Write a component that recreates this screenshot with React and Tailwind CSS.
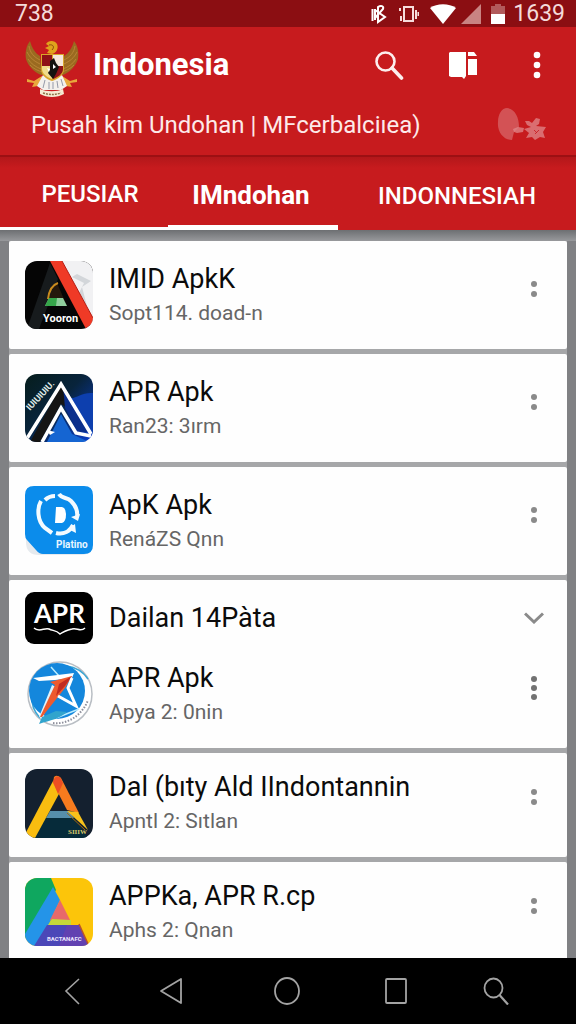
import clsx from 'clsx';

const TABS = [
  { label: 'PEUSIAR', className: 'text-2xl pl-3 pt-1 font-medium border-b-[3px] border-white' },
  { label: 'IMndohan', className: 'text-[26px] pr-1 pt-2 font-bold border-b-[5px] border-white' },
  { label: 'INDONNESIAH', className: 'text-2xl pt-1 font-medium' },
];

const GarudaEmblem = () => (
  <svg viewBox="0 0 54 58" className="w-[54px] h-[58px] shrink-0" aria-label="Garuda">
    {/* wings */}
    <path d="M5 1 C1 6 0 13 1 19 C3 26 9 32 16 35 L20 34 L16 27 L15 16 C10 13 7 8 5 1Z" fill="#9a6a20" />
    <path d="M49 1 C53 6 54 13 53 19 C51 26 45 32 38 35 L34 34 L38 27 L39 16 C44 13 47 8 49 1Z" fill="#9a6a20" />
    <path d="M4 6 C5 13 9 17 15 20 M2 12 C5 18 9 21 15 24 M3 19 C6 24 11 27 16 29 M5 25 C9 29 13 31 18 32" stroke="#c08a3a" strokeWidth=".8" fill="none" />
    <path d="M50 6 C49 13 45 17 39 20 M52 12 C49 18 45 21 39 24 M51 19 C48 24 43 27 38 29 M49 25 C45 29 41 31 36 32" stroke="#c08a3a" strokeWidth=".8" fill="none" />
    {/* head */}
    <path d="M21 4 C23 0 30 0 32 4 C34 9 31 13 27 14 L22 13 L24 10 L20 8 L24 6Z" fill="#e0a21c" />
    <path d="M24 5 C28 4 30 7 27 10" stroke="#8a4b10" strokeWidth="1" fill="none" />
    {/* legs and tail */}
    <path d="M2 39 L9 41 L17 36 L20 40 L13 46 L7 47 L9 43 L2 42Z" fill="#e9a83c" />
    <path d="M52 39 L45 41 L37 36 L34 40 L41 46 L47 47 L45 43 L52 42Z" fill="#e9a83c" />
    <path d="M18 35 L27 40 L37 35 L42 46 L36 50 L18 50 L12 46Z" fill="#f3f0ec" />
    <path d="M20 40 L18 48 M24 42 V49 M28 42 V49 M32 41 L33 48 M36 39 L38 46" stroke="#9499a8" strokeWidth="1" />
    {/* shield */}
    <path d="M16 14 H39 V29 C39 35 33 39 27 41 C21 39 16 35 16 29Z" fill="#d9a52a" />
    <path d="M17 15 H27 V26 H17Z" fill="#8e1117" />
    <path d="M28 15 H38 V26 H28Z" fill="#f5e8dc" />
    <path d="M17 26 H27 V39 C21 37 17 33 17 29Z" fill="#f0dc8a" />
    <path d="M28 26 H38 V29 C38 34 33 37 28 39Z" fill="#8e1117" />
    <path d="M25 21 L29 18 L31 23 L34 27 L31 34 L28 39 L23 33 L25 29Z" fill="#15130f" />
    <path d="M22 28 L25 29 L24 32Z M28 24 L31 27 L28 29Z" fill="#fff" />
    {/* ribbon */}
    <path d="M15 49 C22 52 32 52 38 49 L39 54 C32 58 22 58 15 54Z" fill="#f6ead2" />
    <path d="M18 53 C24 55 30 55 36 53" stroke="#8c7448" strokeWidth="1.500" strokeDasharray="2 1" fill="none" />
  </svg>
);

const FlowerMark = () => (
  <svg viewBox="0 0 50 36" className="w-[50px] h-9 shrink-0" fill="#e08a8c" aria-hidden="true">
    <path d="M10 1 C18 2 22 10 22 20 L17 25 L15 33 C7 33 0 25 1 15 C1 7 5 1 10 1Z" opacity=".5" />
    <path d="M16 22 L21 20 L27 21 L26 25 L20 26 L17 25Z" opacity=".75" />
    <path d="M28 14 L32 14 L35 16 L39 11 L43 12 L42 17 L39 19 L49 20 L46 25 L48 31 L43 30 L38 33 L35 30 L29 31 L32 26 L27 22 L34 20 L30 18Z" opacity=".75" />
    <path d="M37 23 L40 26 M42 23 L38 27" stroke="#c71b1e" strokeWidth=".8" />
  </svg>
);

const StatusBar = () => (
  <div className="h-[27px] shrink-0 bg-[#8b0e12] text-[#f4dada] flex items-center justify-between pl-[15px] pr-[11px] text-[23px] leading-6">
    <span>738</span>
    <div className="flex items-center">
      <svg viewBox="0 0 16 20" className="w-4 h-5 mr-3" fill="none" stroke="#fff" strokeWidth="2">
        <path d="M1.500 5 V17 M4 5 V16 M4 6 L14 13 L7 18 V3 C10 1 13 2 12 5 L4 14" />
      </svg>
      <svg viewBox="0 0 20 20" className="w-5 h-5 mr-[11px]" fill="none" stroke="#f6dcdc" strokeWidth="2">
        <path d="M5 3 H14 V17 H5Z M1 4 V7 M2 12 V17 M17 6 V15 M19.500 8 V12" />
      </svg>
      <svg viewBox="0 0 26 20" className="w-[26px] h-5 mr-[5px]" fill="#fff">
        <path d="M0 4 C7 -1 19 -1 26 4 L13 20Z" />
      </svg>
      <svg viewBox="0 0 20 20" className="w-5 h-5 mr-[10px]" fill="#c98382">
        <path d="M20 0 V20 H0Z" />
      </svg>
      <svg viewBox="0 0 14 20" className="w-[14px] h-5 mr-2">
        <path d="M4 0 H10 V2 H14 V10 H0 V2 H4Z" fill="#b25a5b" />
        <path d="M0 10 H14 V20 H0Z" fill="#fff" />
      </svg>
      <span>1639</span>
    </div>
  </div>
);

const Header = () => (
  <header className="shrink-0 bg-[#c71b1e] text-white pb-2 border-b-2 border-[#9c1013]">
    <div className="flex items-center h-[76px] pl-[25px] pr-0.5">
      <div className="pt-2">
        <GarudaEmblem />
      </div>
      <h1 className="flex-1 pl-3.5 text-[31px] leading-9 font-bold">Indonesia</h1>
      <button type="button" aria-label="Search" className="w-[74px] h-12 flex items-center justify-center">
        <svg viewBox="0 0 30 30" className="w-[30px] h-[30px]" fill="none" stroke="#fdeeee">
          <circle cx="11.500" cy="11.500" r="9" strokeWidth="2.600" />
          <path d="M18 18 L27.500 28" strokeWidth="3.600" strokeLinecap="round" />
        </svg>
      </button>
      <button type="button" aria-label="Library" className="w-[74px] h-12 flex items-center justify-center">
        <svg viewBox="0 0 30 28" className="w-[30px] h-7" fill="#fff">
          <path d="M2 1 H18 V25 L16 28 L14 26 H3 L1 25 V2Z" />
          <path d="M20 1 H26 L29 5 H20Z M20 8 H29 V24 H20Z" />
        </svg>
      </button>
      <button type="button" aria-label="More" className="w-[74px] h-12 flex items-center justify-center">
        <svg viewBox="0 0 8 28" className="w-2 h-7" fill="#fff">
          <circle cx="4" cy="4" r="3.300" />
          <circle cx="4" cy="14" r="3.300" />
          <circle cx="4" cy="24" r="3.300" />
        </svg>
      </button>
    </div>
    <div className="flex items-center justify-between h-11 pl-[31px] pr-[29px]">
      <p className="text-2xl leading-8 whitespace-nowrap text-[#fdeaea]">Pusah kim Undohan | MFcerbalciıea)</p>
      <FlowerMark />
    </div>
  </header>
);

const Dots = ({ count = 2 }) =>
  count === 3 ? (
    <svg viewBox="0 0 8 26" className="w-2 h-[26px]" fill="#727272">
      <circle cx="4" cy="4" r="3" />
      <circle cx="4" cy="13" r="3" />
      <circle cx="4" cy="22" r="3" />
    </svg>
  ) : (
    <svg viewBox="0 0 8 18" className="w-2 h-[18px]" fill="#8a8a8a">
      <circle cx="4" cy="4" r="3" />
      <circle cx="4" cy="14" r="3" />
    </svg>
  );

const YooronIcon = () => (
  <svg viewBox="0 0 68 68" className="w-[68px] h-[68px] rounded-xl">
    <rect width="68" height="68" fill="#050505" />
    <path d="M32 0 H68 V68Z" fill="#f1f1f3" />
    <path d="M47 16 L52 13 L66 20 L57 26 L62 45 L54 32 L59 22Z M50 7 L62 8" fill="#d3d6da" />
    <path d="M25 2 L33 18 L14 68 H2Z" fill="#171b1d" />
    <path d="M32 22 L42 45 H21 L29 25Z" fill="#24180c" />
    <path d="M33 22 C27 24 24 30 23 38" stroke="#c98a1d" strokeWidth="2" fill="none" />
    <path d="M24 37 H38 L42 45 H20Z" fill="#8fce9c" />
    <path d="M24 37 H32 L31 45 H20Z" fill="#35a64a" />
    <path d="M25 0 H37 L68 57 V68 H61Z" fill="#ef3a26" />
    <path d="M37 0 L68 57" stroke="#b51d14" strokeWidth="1" />
    <text x="18" y="61" fontSize="11" fontWeight="bold" fill="#fff">Yooron</text>
  </svg>
);

const PeakIcon = () => (
  <svg viewBox="0 0 68 68" className="w-[68px] h-[68px] rounded-xl">
    <defs>
      <linearGradient id="peak" x1="0" y1="0" x2="1" y2="1">
        <stop offset="0" stopColor="#061d1c" />
        <stop offset=".45" stopColor="#08243c" />
        <stop offset="1" stopColor="#0a3fd0" />
      </linearGradient>
    </defs>
    <rect width="68" height="68" fill="url(#peak)" />
    <path d="M38 14 L46 24 C52 24 58 18 68 19 V60 L62 56Z" fill="#0d3fae" />
    <path d="M36 12 L46 36 L36 30 L15 68 H5Z" fill="#151515" />
    <path d="M38 12 L64 58 L53 58 L40 34Z" fill="#0b2f8c" />
    <path d="M36 40 L47 60 L64 68 H22Z" fill="#1565d2" />
    <path d="M1 66 L36 10 L66 60" stroke="#fff" strokeWidth="3.500" fill="none" />
    <path d="M17 68 L36 34 L51 59 L66 62" stroke="#fff" strokeWidth="3.500" fill="none" />
    <path d="M22 56 L30 58 L25 61Z" fill="#fff" />
    <text x="0" y="0" transform="translate(5 37) rotate(-47)" fontSize="9" fontWeight="bold" fill="#dfe9e6">IUIUIUIU.</text>
  </svg>
);

const PlatinoIcon = () => (
  <svg viewBox="0 0 68 70" className="w-[68px] h-[70px]">
    <path d="M1 20 H67 V58 Q67 69 56 69 H14 Q1 69 1 56Z" fill="#e6eaee" />
    <path d="M9 0 H59 Q68 0 68 9 V59 Q68 68 59 68 H18 Q14 68 11 64 L2 54 Q0 52 0 48 V9 Q0 0 9 0Z" fill="#0b8ceb" />
    <g fill="none" stroke="#f4fbff" strokeWidth="4">
      <path d="M16 15 C12 22 12 35 20 42 L27 47" />
      <path d="M20 14 C23 11 26 10 30 10" />
      <path d="M34 8 C37 13 42 11 46 15 C51 20 53 25 52 31" />
      <path d="M31 47 C39 49 45 45 48 39" />
    </g>
    <path d="M46 31 L55 28 L53 35Z M43 43 L50 38 L51 47Z" fill="#f4fbff" />
    <path d="M31 21 H37 Q41 22 41 28 Q41 36 37 37 H30Z" fill="#fff" />
    <text x="31" y="62" fontSize="10" fontWeight="bold" fill="#e8f6ff">Platino</text>
  </svg>
);

const AprIcon = () => (
  <svg viewBox="0 0 68 52" className="w-[68px] h-[52px]">
    <rect width="68" height="52" rx="9" fill="#000" />
    <text x="9" y="31" fontSize="26" fontWeight="bold" fontFamily="Lato, sans-serif" fill="#fff">APR</text>
    <path d="M9 36 C14 41 20 35 24 37 C28 39 31 38 35 42 C39 39 43 38 47 37 C52 35 55 41 60 36" stroke="#fff" strokeWidth="1.500" fill="none" />
  </svg>
);

const CompassIcon = () => (
  <svg viewBox="0 0 68 72" className="w-[68px] h-[72px]">
    <circle cx="35" cy="36" r="32" fill="#fff" stroke="#b9bec4" strokeWidth="1.500" />
    <path d="M15 60 A31 31 0 1 1 63 21" stroke="#3ba6d4" strokeWidth="1.500" fill="none" />
    <circle cx="32" cy="33" r="28" fill="#1487dc" />
    <path d="M26 9 L34 18 M31 60 L54 51" stroke="#b8ecff" strokeWidth="1.500" />
    <path d="M8 20 L49 15 L47 20 L30 22 L14 23Z" fill="#fff" />
    <path d="M27 27 L33 30 L17 60 L14 59Z" fill="#dff2fb" />
    <path d="M25 24 L47 18 L40 30 L17 59 L15 59 L30 27Z" fill="#ee5a2e" />
    <path d="M47 18 L40 28 L31 38 L34 26Z" fill="#c22b20" />
    <path d="M47 20 L43 30 L51 48 L33 38" stroke="#fff" strokeWidth="3" fill="none" />
    <path d="M14 66 L17 59 L31 53 L42 54 C34 61 26 62 14 66Z" fill="#31a4cd" />
    <path d="M28 65 C43 67 58 56 63 42" stroke="#8d8f9c" strokeWidth="2" strokeDasharray="1.500 1.500" fill="none" />
  </svg>
);

const AmberIcon = () => (
  <svg viewBox="0 0 68 69" className="w-[68px] h-[69px] rounded-xl">
    <rect width="68" height="69" fill="#14202f" />
    <path d="M20 47 H48 L63 69 H8Z" fill="#062b3a" />
    <path d="M25 42 H44 L49 49 H21Z" fill="#568eaa" />
    <path d="M28 12 L35 23 L10 69 H-2Z" fill="#f9bd10" />
    <path d="M29 8 Q32 5 36 9 L54 44 L42 41 L28 14Z" fill="#f77b1e" />
    <path d="M28 13 Q30 6 35 8 L38 14 L33 25Z" fill="#ee4f23" />
    <path d="M42 42 L53 43 L63 61Z" fill="#f8c21b" />
    <path d="M42 44 L60 61" stroke="#a36a10" />
    <text x="43" y="65" fontSize="7" fontWeight="bold" fontFamily="Liberation Serif, serif" fill="#d9c96a">SIIIW</text>
  </svg>
);

const DriveIcon = () => (
  <svg viewBox="0 0 68 68" className="w-[68px] h-[68px] rounded-xl">
    <rect width="68" height="68" fill="#fcc50a" />
    <path d="M0 0 H26 L31 12 L0 62Z" fill="#0fa75f" />
    <path d="M28 9 L35 22 L14 68 H0 V56Z" fill="#2494e8" />
    <path d="M35 22 L45 42 H25Z" fill="#e8696a" />
    <path d="M27 41 L46 42 V47 H23Z" fill="#c5d83a" />
    <path d="M22 47 H54 L64 68 H9Z" fill="#4b47b8" />
    <path d="M42 47 H54 L64 68 H34Z" fill="#6b3fae" opacity=".7" />
    <path d="M54 46 L64 68" stroke="#b8512a" strokeWidth="1.500" />
    <text x="22" y="63" fontSize="6" fontWeight="bold" fill="#ece6ff">BACTANAFC</text>
  </svg>
);

const CARDS = [
  { Icon: YooronIcon, title: 'IMID ApkK', meta: 'Sopt114. doad-n', padding: 'py-5' },
  { Icon: PeakIcon, title: 'APR Apk', meta: 'Ran23: 3ırm', padding: 'py-5' },
  { Icon: PlatinoIcon, title: 'ApK Apk', meta: 'RenáZS Qnn', padding: 'py-5' },
  { group: 'Dailan 14Pàta', Icon: CompassIcon, title: 'APR Apk', meta: 'Apya 2: 0nin', dots: 3, padding: 'pt-3 pb-5' },
  { Icon: AmberIcon, title: 'Dal (bıty Ald IIndontannin', meta: 'Apntl 2: Sıtlan', padding: 'pt-4 pb-5' },
  { Icon: DriveIcon, title: 'APPKa, APR R.cp', meta: 'Aphs 2: Qnan', padding: 'pt-4 pb-5' },
];

const AppRow = ({ Icon, title, meta, dots }) => (
  <div className="flex items-center h-[68px]">
    <div className="w-[68px] shrink-0 flex items-center justify-center">
      <Icon />
    </div>
    <div className="flex-1 min-w-0 pl-4">
      <h2 className="text-[27px] leading-9 text-[#0b0b0b] truncate">{title}</h2>
      <p className="text-[21px] leading-8 text-[#666] truncate">{meta}</p>
    </div>
    <button type="button" aria-label={`Options for ${title}`} className="w-10 h-10 mb-3 flex items-center justify-center">
      <Dots count={dots} />
    </button>
  </div>
);

const BottomNav = () => (
  <nav className="shrink-0 h-[66px] bg-black px-5 grid grid-cols-[104fr_94fr_138fr_80fr_120fr] text-[#a3a3a3]">
    <button type="button" aria-label="Previous" className="flex items-center justify-center">
      <svg viewBox="0 0 16 28" className="w-4 h-7" fill="none" stroke="currentColor" strokeWidth="1.600">
        <path d="M15 2 L2 14 L15 27" />
      </svg>
    </button>
    <button type="button" aria-label="Back" className="flex items-center justify-center">
      <svg viewBox="0 0 24 28" className="w-6 h-7" fill="none" stroke="currentColor" strokeWidth="1.800" strokeLinejoin="round">
        <path d="M22 2 V26 L2 14Z" />
      </svg>
    </button>
    <button type="button" aria-label="Home" className="flex items-center justify-center">
      <svg viewBox="0 0 26 28" className="w-[26px] h-7" fill="none" stroke="currentColor" strokeWidth="1.800">
        <ellipse cx="13" cy="14" rx="12" ry="13" />
      </svg>
    </button>
    <button type="button" aria-label="Recent" className="flex items-center justify-center">
      <svg viewBox="0 0 24 28" className="w-6 h-7" fill="none" stroke="currentColor" strokeWidth="1.800">
        <rect x="2" y="2" width="20" height="24" rx="1" />
      </svg>
    </button>
    <button type="button" aria-label="Find" className="flex items-center justify-center">
      <svg viewBox="0 0 26 28" className="w-[26px] h-7" fill="none" stroke="currentColor" strokeWidth="1.800">
        <ellipse cx="10.500" cy="11" rx="9" ry="9.500" />
        <path d="M16.500 18 L25 27.500" strokeWidth="2.200" />
      </svg>
    </button>
  </nav>
);

export default function App() {
  return (
    <div className="h-screen flex flex-col overflow-hidden font-[Roboto,sans-serif] bg-[#808184]">
      <StatusBar />
      <Header />

      <div role="tablist" className="shrink-0 h-[73px] grid grid-cols-[168fr_170fr_238fr] bg-gradient-to-b from-[#b3171a] from-0% to-[#c71b1e] to-15% text-white">
        {TABS.map((tab) => (
          <button
            key={tab.label}
            type="button"
            role="tab"
            aria-selected={tab.label === 'IMndohan'}
            className={clsx('whitespace-nowrap', tab.className)}
          >
            {tab.label}
          </button>
        ))}
      </div>

      <main className="flex-1 min-h-0 overflow-hidden">
        <div className="h-[11px] bg-gradient-to-b from-[#6d6f72] to-[#98999c]" />
        <ul className="mx-[9px] flex flex-col gap-[5px] bg-[#a6a7a9]">
          {CARDS.map((card, i) => (
            <li key={i} className={clsx('bg-[#fefefe] rounded-xs pl-4 pr-[13px]', card.padding)}>
              {card.group && (
                <div className="flex items-center mb-4">
                  <AprIcon />
                  <h2 className="flex-1 pl-4 text-[27px] leading-9 text-[#0b0b0b]">{card.group}</h2>
                  <button type="button" aria-label="Expand" className="w-10 h-10 flex items-center justify-center">
                    <svg viewBox="0 0 20 12" className="w-5 h-3" fill="none" stroke="#8a8a8a" strokeWidth="3">
                      <path d="M1 1.500 L10 10 L19 1.500" />
                    </svg>
                  </button>
                </div>
              )}
              <AppRow {...card} />
            </li>
          ))}
        </ul>
      </main>

      <BottomNav />
    </div>
  );
}
